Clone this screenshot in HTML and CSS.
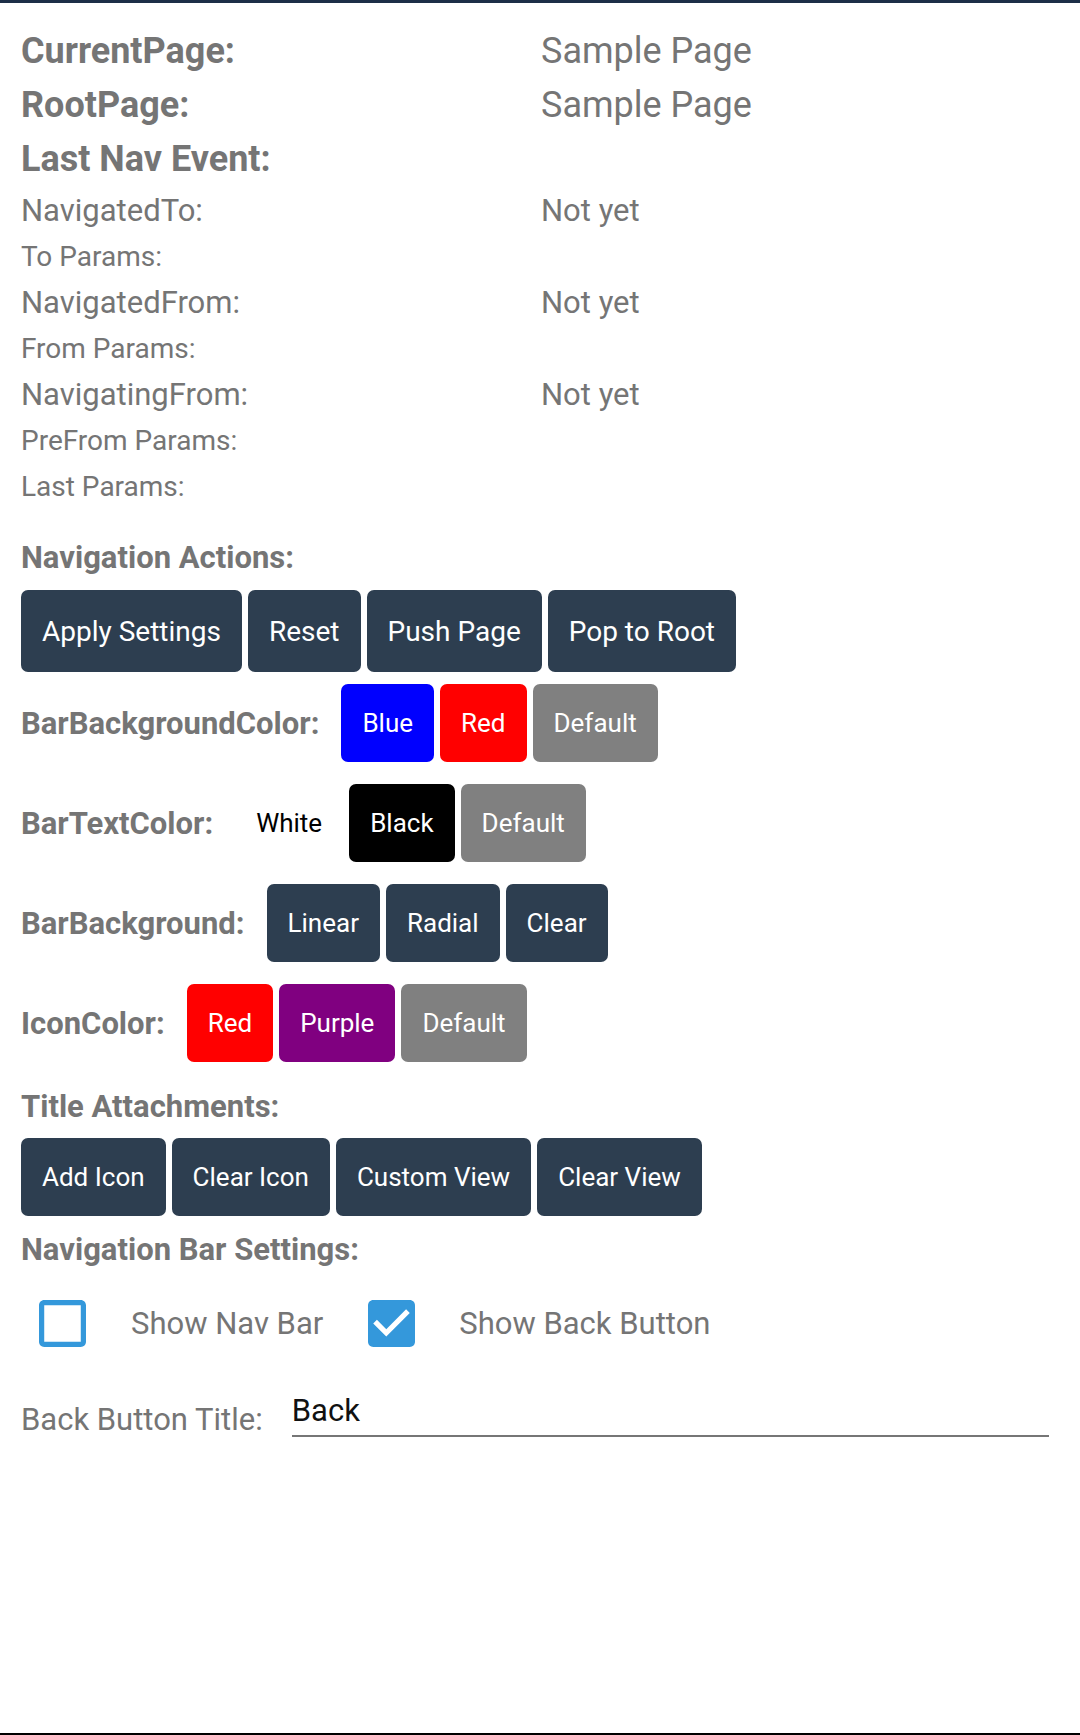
FILE: index.html
```html
<!DOCTYPE html>
<html lang="en">
<head>
<meta charset="utf-8">
<title>Navigation Page Sample</title>
<link rel="stylesheet" href="styles.css">
</head>
<body>
<main class="page">
  <section class="info">
    <div class="k big">CurrentPage:</div><div class="v big">Sample Page</div>
    <div class="k big">RootPage:</div><div class="v big">Sample Page</div>
    <div class="k big last">Last Nav Event:</div><div class="v big last"></div>
    <div class="k mid">NavigatedTo:</div><div class="v mid">Not yet</div>
    <div class="k sm">To Params:</div><div class="v sm"></div>
    <div class="k mid">NavigatedFrom:</div><div class="v mid">Not yet</div>
    <div class="k sm">From Params:</div><div class="v sm"></div>
    <div class="k mid">NavigatingFrom:</div><div class="v mid">Not yet</div>
    <div class="k sm">PreFrom Params:</div><div class="v sm"></div>
    <div class="k sm">Last Params:</div><div class="v sm"></div>
  </section>

  <h2 class="heading nav-actions">Navigation Actions:</h2>
  <div class="btns actions">
    <button class="btn lg">Apply Settings</button>
    <button class="btn lg">Reset</button>
    <button class="btn lg">Push Page</button>
    <button class="btn lg">Pop to Root</button>
  </div>

  <div class="crow first">
    <span class="clabel">BarBackgroundColor:</span>
    <button class="btn md blue">Blue</button>
    <button class="btn md red">Red</button>
    <button class="btn md gray">Default</button>
  </div>
  <div class="crow">
    <span class="clabel">BarTextColor:</span>
    <button class="btn md white">White</button>
    <button class="btn md black">Black</button>
    <button class="btn md gray">Default</button>
  </div>
  <div class="crow">
    <span class="clabel">BarBackground:</span>
    <button class="btn md">Linear</button>
    <button class="btn md">Radial</button>
    <button class="btn md">Clear</button>
  </div>
  <div class="crow">
    <span class="clabel">IconColor:</span>
    <button class="btn md red">Red</button>
    <button class="btn md purple">Purple</button>
    <button class="btn md gray">Default</button>
  </div>

  <h2 class="heading title-att">Title Attachments:</h2>
  <div class="btns attach">
    <button class="btn md">Add Icon</button>
    <button class="btn md">Clear Icon</button>
    <button class="btn md">Custom View</button>
    <button class="btn md">Clear View</button>
  </div>

  <h2 class="heading bar-settings">Navigation Bar Settings:</h2>
  <div class="checks">
    <svg class="cb cb-first" viewBox="3 3 18 18" aria-hidden="true">
      <path fill="#3498db" d="M19 5v14H5V5h14m0-2H5c-1.1 0-2 .9-2 2v14c0 1.1.9 2 2 2h14c1.1 0 2-.9 2-2V5c0-1.1-.9-2-2-2z"/>
    </svg>
    <span class="cb-label first-label">Show Nav Bar</span>
    <svg class="cb cb-second" viewBox="3 3 18 18" aria-hidden="true">
      <path fill="#3498db" d="M19 3H5c-1.11 0-2 .9-2 2v14c0 1.1.89 2 2 2h14c1.11 0 2-.9 2-2V5c0-1.1-.89-2-2-2z"/>
      <path fill="#ffffff" d="M10 17l-5-5 1.41-1.41L10 14.17l7.59-7.59L19 8l-9 9z"/>
    </svg>
    <span class="cb-label second-label">Show Back Button</span>
  </div>

  <div class="entry-row">
    <span class="entry-label">Back Button Title:</span>
    <div class="entry">Back</div>
  </div>
</main>
</body>
</html>
```

FILE: styles.css
```css
* {
  box-sizing: border-box;
}

html, body {
  margin: 0;
  padding: 0;
  background: #ffffff;
}

body {
  font-family: Roboto, "Noto Sans", "Liberation Sans", sans-serif;
  color: #757575;
  height: 1735px;
  border-top: 3px solid #1d2f47;
  border-bottom: 2px solid #000000;
  overflow: hidden;
}

.page {
  padding: 21px 20px 0 21px;
}

/* info grid */
.info {
  display: grid;
  grid-template-columns: 520px 1fr;
}

.k, .v {
  white-space: nowrap;
}

.big {
  font-size: 36px;
  height: 54px;
  line-height: 54px;
}

.k.big {
  font-weight: 700;
}

.big.last {
  height: 56px;
}

.mid {
  font-size: 31px;
  height: 46px;
  line-height: 46px;
}

.sm {
  font-size: 28px;
  height: 46px;
  line-height: 46px;
}

/* headings */
.heading {
  margin: 0;
  font-size: 31px;
  font-weight: 700;
  height: 46px;
  line-height: 46px;
  color: #757575;
}

.nav-actions {
  margin-top: 25px;
}

.title-att {
  margin-top: 22px;
}

.bar-settings {
  margin-top: 11px;
}

/* buttons */
.btns {
  display: flex;
  gap: 6px;
}

.actions {
  margin-top: 9px;
}

.attach {
  margin-top: 8px;
}

.btn {
  border: none;
  margin: 0;
  font-family: Roboto, "Noto Sans", "Liberation Sans", sans-serif;
  background: #2d3e50;
  color: #ffffff;
  border-radius: 7px;
  padding: 0 21px;
  display: flex;
  align-items: center;
  justify-content: center;
  white-space: nowrap;
}

.btn.lg {
  height: 82px;
  font-size: 28px;
}

.btn.md {
  height: 78px;
  font-size: 26px;
}

.btn.blue { background: #0000ff; }
.btn.red { background: #ff0000; }
.btn.gray { background: #808080; }
.btn.black { background: #000000; }
.btn.purple { background: #800080; }
.btn.white { background: #ffffff; color: #000000; }

/* colour rows */
.crow {
  display: flex;
  align-items: center;
  gap: 6px;
  height: 78px;
  margin-top: 22px;
}

.crow.first {
  margin-top: 12px;
}

.clabel {
  font-size: 31px;
  font-weight: 700;
  margin-right: 16px;
  white-space: nowrap;
}

/* checkboxes */
.checks {
  display: flex;
  align-items: center;
  height: 47px;
  margin-top: 27px;
}

.cb {
  width: 47px;
  height: 47px;
  flex: none;
}

.cb-first {
  margin-left: 18px;
}

.cb-second {
  margin-left: 45px;
}

.cb-label {
  font-size: 31px;
  white-space: nowrap;
}

.first-label {
  margin-left: 45px;
}

.second-label {
  margin-left: 44px;
}

/* entry */
.entry-row {
  display: flex;
  align-items: flex-start;
  margin-top: 44px;
}

.entry-label {
  font-size: 31px;
  line-height: 58px;
  white-space: nowrap;
}

.entry {
  flex: 1;
  margin-left: 29px;
  margin-right: 11px;
  font-size: 31px;
  line-height: 40px;
  height: 46px;
  padding-bottom: 4px;
  color: #111111;
  border-bottom: 2px solid #767676;
}
```
